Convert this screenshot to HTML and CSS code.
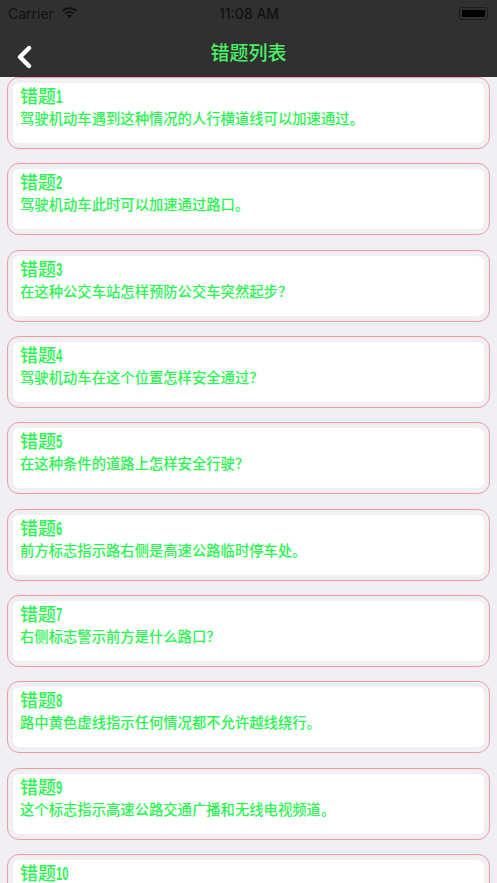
FILE: index.html
```html
<!DOCTYPE html>
<html lang="zh-CN">
<head>
    <meta charset="UTF-8">
    <meta name="viewport" content="width=device-width, initial-scale=1.0">
    <title>错题列表</title>
    <link rel="stylesheet" href="styles.css">
</head>
<body>
    <div class="app-container">
        <header>
            <div class="status-bar">
                <div class="status-left">
                    <span>Carrier</span>
                    <svg class="wifi" width="17" height="12" viewBox="0 0 17 12">
                        <path d="M8.5 2.2c2.4 0 4.6.9 6.3 2.5l1.2-1.3C14 1.400 11.400.3 8.500.3S3 1.400 1 3.400l1.200 1.300C3.900 3.100 6.100 2.200 8.500 2.200z"/>
                        <path d="M8.500 5.700c1.400 0 2.700.5 3.800 1.500l1.200-1.300C12.200 4.600 10.400 3.900 8.500 3.900s-3.700.7-5 2l1.200 1.300c1.100-1 2.400-1.500 3.800-1.500z"/>
                        <path d="M8.500 7.500c-1 0-1.800.3-2.500 1l2.500 2.800 2.500-2.800c-.7-.7-1.500-1-2.500-1z"/>
                    </svg>
                </div>
                <span class="status-time">11:08 AM</span>
                <div class="battery"><span class="battery-level"></span></div>
            </div>
            <div class="nav-bar">
                <svg class="back" width="16" height="24" viewBox="0 0 16 24">
                    <path d="M13 3 L4 12 L13 21" fill="none" stroke="#fff" stroke-width="4.4" stroke-linecap="round" stroke-linejoin="round"/>
                </svg>
                <h1>错题列表</h1>
            </div>
        </header>

        <div class="content">
            <div class="card"><div class="card-inner">
                <div class="card-title">错题<span class="num">1</span></div>
                <div class="card-text">驾驶机动车遇到这种情况的人行横道线可以加速通过。</div>
            </div></div>
            <div class="card"><div class="card-inner">
                <div class="card-title">错题<span class="num">2</span></div>
                <div class="card-text">驾驶机动车此时可以加速通过路口。</div>
            </div></div>
            <div class="card"><div class="card-inner">
                <div class="card-title">错题<span class="num">3</span></div>
                <div class="card-text">在这种公交车站怎样预防公交车突然起步？</div>
            </div></div>
            <div class="card"><div class="card-inner">
                <div class="card-title">错题<span class="num">4</span></div>
                <div class="card-text">驾驶机动车在这个位置怎样安全通过？</div>
            </div></div>
            <div class="card"><div class="card-inner">
                <div class="card-title">错题<span class="num">5</span></div>
                <div class="card-text">在这种条件的道路上怎样安全行驶？</div>
            </div></div>
            <div class="card"><div class="card-inner">
                <div class="card-title">错题<span class="num">6</span></div>
                <div class="card-text">前方标志指示路右侧是高速公路临时停车处。</div>
            </div></div>
            <div class="card"><div class="card-inner">
                <div class="card-title">错题<span class="num">7</span></div>
                <div class="card-text">右侧标志警示前方是什么路口？</div>
            </div></div>
            <div class="card"><div class="card-inner">
                <div class="card-title">错题<span class="num">8</span></div>
                <div class="card-text">路中黄色虚线指示任何情况都不允许越线绕行。</div>
            </div></div>
            <div class="card"><div class="card-inner">
                <div class="card-title">错题<span class="num">9</span></div>
                <div class="card-text">这个标志指示高速公路交通广播和无线电视频道。</div>
            </div></div>
            <div class="card"><div class="card-inner">
                <div class="card-title">错题<span class="num">10</span></div>
            </div></div>
        </div>
    </div>
</body>
</html>
```

FILE: styles.css
```css
* {
    box-sizing: border-box;
    margin: 0;
    padding: 0;
}

body {
    font-family: "Noto Sans CJK SC", "Noto Sans", sans-serif;
    background-color: #efeff4;
    height: 100vh;
    overflow: hidden;
}

.app-container {
    height: 100vh;
    display: flex;
    flex-direction: column;
    overflow: hidden;
}

header {
    flex: none;
    height: 77px;
    background-color: #303030;
}

.status-bar {
    height: 26px;
    padding: 0 8px;
    display: flex;
    align-items: center;
    justify-content: space-between;
    position: relative;
    font-family: "Inter", "Liberation Sans", sans-serif;
    font-size: 14px;
    color: #111;
}

.status-left {
    display: flex;
    align-items: center;
    gap: 7px;
}

.wifi {
    fill: #111;
}

.status-time {
    position: absolute;
    left: 219px;
    font-weight: 500;
}

.battery {
    width: 29px;
    height: 13px;
    margin-right: 1px;
    padding: 2px;
    border: 1px solid #1c1c1c;
    border-radius: 3px;
}

.battery-level {
    display: block;
    height: 100%;
    background-color: #000;
    border-radius: 1px;
}

.nav-bar {
    height: 51px;
    display: flex;
    align-items: center;
    justify-content: center;
    position: relative;
}

.back {
    position: absolute;
    left: 16px;
    top: 19px;
}

h1 {
    font-size: 19px;
    font-weight: 500;
    color: #4cef68;
}

.content {
    flex: 1;
    padding: 0 7px;
    display: flex;
    flex-direction: column;
    gap: 14.33px;
    overflow: hidden;
}

.card {
    flex: none;
    height: 72px;
    padding: 5px;
    border: 1px solid #f29a9f;
    border-radius: 12px;
}

.card-inner {
    height: 100%;
    padding: 0 7px;
    background-color: #fff;
    border-radius: 6px;
}

.card-title {
    font-size: 18px;
    font-weight: 500;
    line-height: 24px;
    color: #2cf552;
}

.num {
    display: inline-block;
    font-family: "Liberation Sans", sans-serif;
    font-weight: 700;
    transform: scaleX(0.62);
    transform-origin: left;
}

.card-text {
    font-size: 14.33px;
    font-weight: 500;
    line-height: 18px;
    color: #2cf552;
}
```
